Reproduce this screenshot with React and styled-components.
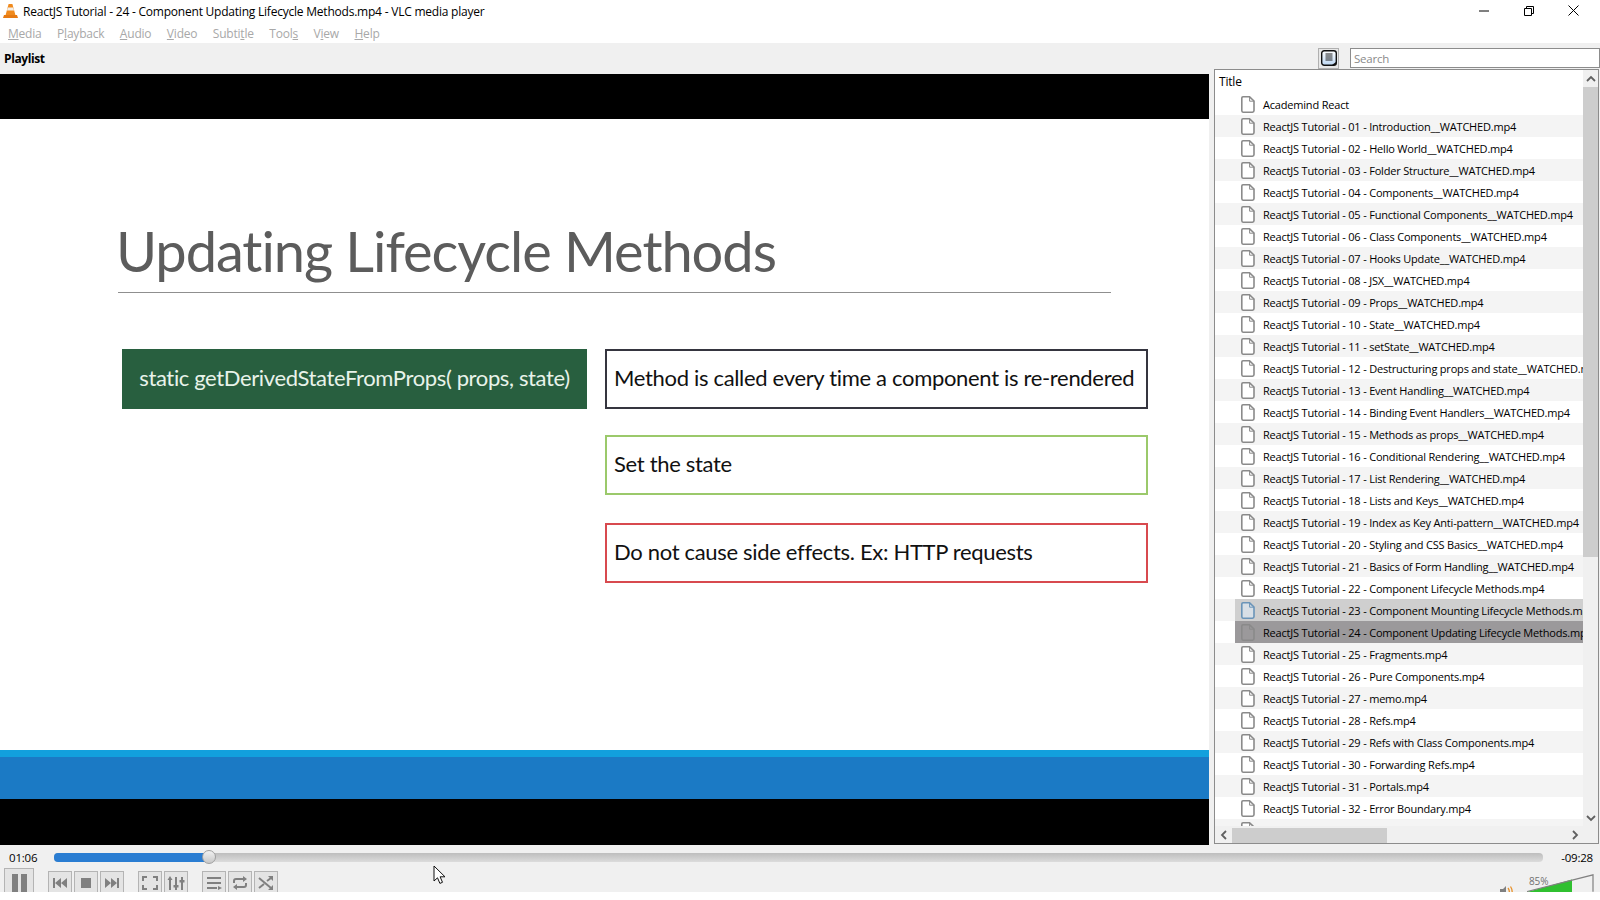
import styled, { createGlobalStyle } from "styled-components";

const GlobalStyle = createGlobalStyle`
  html, body {
    margin: 0;
    padding: 0;
    background: #ffffff;
  }
  * {
    box-sizing: border-box;
  }
`;

const titles = [
  "Academind React",
  "ReactJS Tutorial - 01 - Introduction__WATCHED.mp4",
  "ReactJS Tutorial - 02 - Hello World__WATCHED.mp4",
  "ReactJS Tutorial - 03 - Folder Structure__WATCHED.mp4",
  "ReactJS Tutorial - 04 - Components__WATCHED.mp4",
  "ReactJS Tutorial - 05 - Functional Components__WATCHED.mp4",
  "ReactJS Tutorial - 06 - Class Components__WATCHED.mp4",
  "ReactJS Tutorial - 07 - Hooks Update__WATCHED.mp4",
  "ReactJS Tutorial - 08 - JSX__WATCHED.mp4",
  "ReactJS Tutorial - 09 - Props__WATCHED.mp4",
  "ReactJS Tutorial - 10 - State__WATCHED.mp4",
  "ReactJS Tutorial - 11 - setState__WATCHED.mp4",
  "ReactJS Tutorial - 12 - Destructuring props and state__WATCHED.mp4",
  "ReactJS Tutorial - 13 - Event Handling__WATCHED.mp4",
  "ReactJS Tutorial - 14 - Binding Event Handlers__WATCHED.mp4",
  "ReactJS Tutorial - 15 - Methods as props__WATCHED.mp4",
  "ReactJS Tutorial - 16 - Conditional Rendering__WATCHED.mp4",
  "ReactJS Tutorial - 17 - List Rendering__WATCHED.mp4",
  "ReactJS Tutorial - 18 - Lists and Keys__WATCHED.mp4",
  "ReactJS Tutorial - 19 - Index as Key Anti-pattern__WATCHED.mp4",
  "ReactJS Tutorial - 20 - Styling and CSS Basics__WATCHED.mp4",
  "ReactJS Tutorial - 21 - Basics of Form Handling__WATCHED.mp4",
  "ReactJS Tutorial - 22 - Component Lifecycle Methods.mp4",
  "ReactJS Tutorial - 23 - Component Mounting Lifecycle Methods.mp4",
  "ReactJS Tutorial - 24 - Component Updating Lifecycle Methods.mp4",
  "ReactJS Tutorial - 25 - Fragments.mp4",
  "ReactJS Tutorial - 26 - Pure Components.mp4",
  "ReactJS Tutorial - 27 - memo.mp4",
  "ReactJS Tutorial - 28 - Refs.mp4",
  "ReactJS Tutorial - 29 - Refs with Class Components.mp4",
  "ReactJS Tutorial - 30 - Forwarding Refs.mp4",
  "ReactJS Tutorial - 31 - Portals.mp4",
  "ReactJS Tutorial - 32 - Error Boundary.mp4",
  "ReactJS Tutorial - 33 - Higher Order Components (Part 1).mp4",
];

// each menu label split around its underlined access key
const menus = [
  ["", "M", "edia"],
  ["P", "l", "ayback"],
  ["", "A", "udio"],
  ["", "V", "ideo"],
  ["Subti", "t", "le"],
  ["Tool", "s", ""],
  ["V", "i", "ew"],
  ["", "H", "elp"],
];

const Cone = () => (
  <svg width="15" height="16" viewBox="0 0 15 16">
    <path d="M5.6 1h3.8l3 11H2.6z" fill="#f08a1d" />
    <path d="M4.8 4.4h5.4l.8 3H4z" fill="#f4f0ea" />
    <path d="M1 12h13l1 3H0z" fill="#e67a12" />
  </svg>
);

const FileSvg = styled.svg`
  flex: none;
`;

const FileIcon = ({ color = "#8a8a8a", fill = "#ffffff" }) => (
  <FileSvg width="14" height="17" viewBox="0 0 14 17">
    <path
      d="M2 .8h6.6L13 5v9.6c0 .9-.6 1.6-1.5 1.6H2c-.9 0-1.2-.7-1.2-1.6V2C.8 1.2 1.2.8 2 .8z"
      fill={fill}
      stroke={color}
      strokeWidth="1.6"
    />
    <path d="M8.6 1v4.2H13" fill="none" stroke={color} strokeWidth="1" />
  </FileSvg>
);

const Page = styled.div`
  width: 1600px;
  height: 900px;
  position: relative;
  overflow: hidden;
  background: #ffffff;
`;

const Player = styled.div`
  height: 892px;
  display: flex;
  flex-direction: column;
  overflow: hidden;
  background: #f0f0f0;
  font-family: "Open Sans", "Noto Sans", sans-serif;
`;

const TitleBar = styled.div`
  height: 22px;
  flex: none;
  display: flex;
  align-items: center;
  background: #ffffff;
  padding-left: 3px;
`;

const WindowTitle = styled.div`
  margin-left: 5px;
  font-size: 12px;
  letter-spacing: -0.22px;
  color: #000000;
  white-space: nowrap;
`;

const WindowButtons = styled.div`
  margin-left: auto;
  padding-right: 4px;
  display: flex;
  align-self: flex-start;
`;

const WindowButton = styled.div`
  width: 45px;
  height: 21px;
  display: flex;
  align-items: center;
  justify-content: center;
`;

const MenuBar = styled.div`
  height: 21px;
  flex: none;
  display: flex;
  align-items: center;
  gap: 15.5px;
  padding: 2px 0 0 8px;
  background: #ffffff;
  font-size: 12px;
  letter-spacing: -0.21px;
  color: #a8a8a8;
`;

const Key = styled.span`
  text-decoration: underline;
`;

const PlaylistBar = styled.div`
  height: 31px;
  flex: none;
  display: flex;
  align-items: center;
  padding: 0 0 1px 4px;
`;

const PlaylistLabel = styled.div`
  font-size: 12px;
  font-weight: 700;
  letter-spacing: -0.4px;
  color: #000000;
`;

const ViewToggle = styled.div`
  width: 21px;
  height: 21px;
  margin-left: auto;
  margin-right: 11px;
  display: flex;
  align-items: center;
  justify-content: center;
  background: #e8e8e8;
  border: 1px solid #b0b0b0;
`;

const Search = styled.div`
  width: 250px;
  height: 20px;
  display: flex;
  align-items: center;
  padding-left: 3px;
  background: #ffffff;
  border: 1px solid #8c8c8c;
  font-size: 11.5px;
  letter-spacing: -0.2px;
  color: #8a8a8a;
`;

const Main = styled.div`
  height: 771px;
  flex: none;
  display: flex;
`;

const Video = styled.div`
  width: 1209px;
  flex: none;
  display: flex;
  flex-direction: column;
  background: #000000;
  font-family: "Lato", "Open Sans", sans-serif;
  font-variant-ligatures: none;
`;

const Letterbox = styled.div`
  flex: none;
  height: ${(p) => p.$height}px;
  background: #000000;
`;

const Slide = styled.div`
  height: 631px;
  flex: none;
  padding: 97px 98px 0 118px;
  background: #ffffff;
`;

const SlideTitle = styled.h1`
  margin: 0;
  height: 77px;
  line-height: 70px;
  text-indent: -2px;
  font-size: 56px;
  font-weight: 400;
  letter-spacing: -1.05px;
  color: #5c5c5c;
  border-bottom: 1px solid #8f8f8f;
  white-space: nowrap;
`;

const SlideBody = styled.div`
  margin: 56px -37px 0 4px;
  display: grid;
  grid-template-columns: 465px 543px;
  column-gap: 18px;
  align-items: start;
`;

const MethodName = styled.div`
  height: 60px;
  display: flex;
  align-items: center;
  justify-content: center;
  padding-bottom: 4px;
  background: #285f3f;
  color: #e8f3ea;
  font-size: 22px;
  letter-spacing: -0.37px;
  white-space: nowrap;
`;

const Notes = styled.div`
  display: flex;
  flex-direction: column;
  gap: 26px;
`;

const Note = styled.div`
  height: 60px;
  margin-top: ${(p) => p.$push || 0}px;
  display: flex;
  align-items: center;
  padding: 0 0 4px 7px;
  border: 2px solid ${(p) => p.$color};
  background: #ffffff;
  color: #111111;
  font-size: 22px;
  letter-spacing: -0.32px;
  white-space: nowrap;
`;

const SlideFooter = styled.div`
  height: 49px;
  flex: none;
  background: #1b7ac5;
  border-top: 7px solid #12a0dd;
`;

const Panel = styled.div`
  margin: -5px 1px 1px 5px;
  flex: 1;
  min-width: 0;
  display: flex;
  flex-direction: column;
  background: #ffffff;
  border: 1px solid #8c8c8c;
  font-family: "Open Sans", "Noto Sans", sans-serif;
`;

const PanelTop = styled.div`
  flex: 1;
  min-height: 0;
  display: flex;
`;

const ListArea = styled.div`
  flex: 1;
  min-width: 0;
  overflow: hidden;
`;

const ListHeader = styled.div`
  height: 23px;
  padding: 3px 0 0 4px;
  font-size: 12px;
  line-height: 18px;
  letter-spacing: -0.2px;
  color: #000000;
`;

const Row = styled.div`
  height: 22px;
  display: flex;
  align-items: center;
  background: ${(p) => (p.$odd ? "#f4f4f4" : "#ffffff")};
`;

const RowBody = styled.div`
  flex: 1;
  min-width: 0;
  height: 22px;
  margin-left: 20px;
  padding-left: 6px;
  display: flex;
  align-items: center;
  overflow: hidden;
  background: ${(p) => p.$bg || "transparent"};
`;

const RowTitle = styled.span`
  margin-left: 8px;
  font-size: 11px;
  letter-spacing: -0.19px;
  color: #000000;
  white-space: nowrap;
`;

const VScroll = styled.div`
  width: 15px;
  flex: none;
  display: flex;
  flex-direction: column;
  background: #f0f0f0;
`;

const ScrollArrow = styled.div`
  height: 17px;
  flex: none;
  display: flex;
  align-items: center;
  justify-content: center;
  background: #f0f0f0;
`;

const VTrack = styled.div`
  flex: 1;
`;

const VThumb = styled.div`
  height: 470px;
  background: #cdcdcd;
`;

const HScroll = styled.div`
  height: 17px;
  flex: none;
  display: flex;
  padding-right: 15px;
  background: #f0f0f0;
`;

const HArrow = styled.div`
  width: 17px;
  flex: none;
  display: flex;
  align-items: center;
  justify-content: center;
`;

const HTrack = styled.div`
  flex: 1;
  padding-top: 2px;
`;

const HThumb = styled.div`
  width: 155px;
  height: 100%;
  background: #cdcdcd;
`;

const Controls = styled.div`
  flex: 1;
  min-height: 0;
  display: flex;
  flex-direction: column;
  background: #f0f0f0;
`;

const SeekRow = styled.div`
  height: 23px;
  flex: none;
  display: flex;
  align-items: center;
  padding: 2px 7px 0 9px;
  font-size: 11.5px;
  letter-spacing: -0.2px;
  color: #000000;
`;

const Time = styled.span`
  width: 45px;
  flex: none;
`;

const RemainingTime = styled.span`
  width: 50px;
  flex: none;
  text-align: right;
`;

const SeekTrack = styled.div`
  flex: 1;
  height: 9px;
  position: relative;
  border-radius: 4px;
  background: linear-gradient(#bdbdbd, #dcdcdc);
`;

const SeekFill = styled.div`
  height: 100%;
  border-radius: 4px 0 0 4px;
  background: #2a7dd2;
`;

const SeekHandle = styled.div`
  position: absolute;
  top: -3px;
  width: 14px;
  height: 14px;
  border-radius: 50%;
  background: linear-gradient(#f2f2f2, #c8c8c8);
  border: 1px solid #a0a0a0;
`;

const ButtonRow = styled.div`
  height: 24px;
  flex: none;
  display: flex;
  align-items: flex-start;
  padding: 0 0 0 4px;
`;

const ButtonGroup = styled.div`
  display: flex;
  gap: 2px;
  margin-left: ${(p) => p.$gap}px;
  margin-top: 3px;
`;

const PauseButton = styled.div`
  width: 30px;
  height: 30px;
  flex: none;
  display: flex;
  align-items: flex-start;
  justify-content: center;
  padding-top: 5px;
  gap: 3px;
  background: #e4e4e4;
  border: 1px solid #b4b4b4;
`;

const PauseBar = styled.div`
  width: 6px;
  height: 19px;
  background: #808080;
`;

const ToolButton = styled.div`
  width: 24px;
  height: 24px;
  display: flex;
  align-items: flex-start;
  justify-content: center;
  padding-top: 2px;
  background: #e4e4e4;
  border: 1px solid #b4b4b4;
`;

const VolumeArea = styled.div`
  margin-left: auto;
  margin-right: 5px;
  display: flex;
  align-items: flex-end;
  align-self: flex-end;
  position: relative;
  height: 20px;
`;

const Speaker = styled.svg`
  margin-right: 13px;
  margin-bottom: -5px;
`;

const VolumeLabel = styled.span`
  position: absolute;
  left: 29px;
  top: 2px;
  font-size: 10px;
  letter-spacing: -0.1px;
  color: #707070;
`;

const Pointer = styled.svg`
  position: absolute;
  left: 433px;
  top: 865px;
`;

const Chevron = ({ d }) => (
  <svg width="10" height="10" viewBox="0 0 10 10">
    <path d={d} fill="none" stroke="#606060" strokeWidth="1.8" />
  </svg>
);

const Glyph = ({ children }) => (
  <svg width="18" height="18" viewBox="0 0 18 18" fill="#808080" stroke="#808080">
    {children}
  </svg>
);

export default function App() {
  const played = (66 / 634) * 100;

  return (
    <Page>
      <GlobalStyle />
      <Player>
        <TitleBar>
          <Cone />
          <WindowTitle>
            ReactJS Tutorial - 24 - Component Updating Lifecycle Methods.mp4 - VLC media player
          </WindowTitle>
          <WindowButtons>
            <WindowButton>
              <svg width="10" height="10" viewBox="0 0 10 10">
                <path d="M0 5h10" stroke="#000" strokeWidth="1" />
              </svg>
            </WindowButton>
            <WindowButton>
              <svg width="10" height="10" viewBox="0 0 10 10" fill="none" stroke="#000">
                <path d="M.5 2.500h7v7h-7z" />
                <path d="M2.500 2.500v-2h7v7h-2" />
              </svg>
            </WindowButton>
            <WindowButton>
              <svg width="11" height="11" viewBox="0 0 11 11" stroke="#000">
                <path d="M.5.5l10 10M10.500.5l-10 10" />
              </svg>
            </WindowButton>
          </WindowButtons>
        </TitleBar>

        <MenuBar>
          {menus.map(([before, key, after]) => (
            <span key={before + key + after}>
              {before}
              <Key>{key}</Key>
              {after}
            </span>
          ))}
        </MenuBar>

        <PlaylistBar>
          <PlaylistLabel>Playlist</PlaylistLabel>
          <ViewToggle>
            <svg width="16" height="16" viewBox="0 0 16 16">
              <defs>
                <linearGradient id="toggleFill" x1="0" y1="0" x2="0" y2="1">
                  <stop offset="0" stopColor="#ffffff" />
                  <stop offset="1" stopColor="#bcd6f2" />
                </linearGradient>
              </defs>
              <rect x=".7" y=".7" width="14.6" height="14.6" rx="2.500" fill="url(#toggleFill)" stroke="#111" strokeWidth="1.400" />
              <path d="M4.500 4h7M4.500 6h7M4.500 8h7M4.500 10h7" stroke="#222" strokeWidth="1.100" />
              <path d="M11 15l4-3v3z" fill="#111" />
            </svg>
          </ViewToggle>
          <Search>Search</Search>
        </PlaylistBar>

        <Main>
          <Video>
            <Letterbox $height={45} />
            <Slide>
              <SlideTitle>Updating Lifecycle Methods</SlideTitle>
              <SlideBody>
                <MethodName>static getDerivedStateFromProps( props, state)</MethodName>
                <Notes>
                  <Note $color="#35353f">Method is called every time a component is re-rendered</Note>
                  <Note $color="#9bc96b">Set the state</Note>
                  <Note $color="#d84a4f" $push={2}>Do not cause side effects. Ex: HTTP requests</Note>
                </Notes>
              </SlideBody>
            </Slide>
            <SlideFooter />
            <Letterbox $height={46} />
          </Video>

          <Panel>
            <PanelTop>
              <ListArea>
                <ListHeader>Title</ListHeader>
                {titles.map((title, i) => {
                  const selected = i === 23 ? "#cfcfcf" : i === 24 ? "#9b999b" : null;
                  return (
                    <Row key={title} $odd={i % 2 === 1}>
                      <RowBody $bg={selected}>
                        <FileIcon
                          color={i === 23 ? "#6a94b8" : "#8a8a8a"}
                          fill={i === 23 ? "#d8dfe6" : i === 24 ? "#9b999b" : "#ffffff"}
                        />
                        <RowTitle>{title}</RowTitle>
                      </RowBody>
                    </Row>
                  );
                })}
              </ListArea>
              <VScroll>
                <ScrollArrow>
                  <Chevron d="M1 7l4-4 4 4" />
                </ScrollArrow>
                <VTrack>
                  <VThumb />
                </VTrack>
                <ScrollArrow>
                  <Chevron d="M1 3l4 4 4-4" />
                </ScrollArrow>
              </VScroll>
            </PanelTop>
            <HScroll>
              <HArrow>
                <Chevron d="M7 1L3 5l4 4" />
              </HArrow>
              <HTrack>
                <HThumb />
              </HTrack>
              <HArrow>
                <Chevron d="M3 1l4 4-4 4" />
              </HArrow>
            </HScroll>
          </Panel>
        </Main>

        <Controls>
          <SeekRow>
            <Time>01:06</Time>
            <SeekTrack>
              <SeekFill style={{ width: `${played}%` }} />
              <SeekHandle style={{ left: `calc(${played}% - 7px)` }} />
            </SeekTrack>
            <RemainingTime>-09:28</RemainingTime>
          </SeekRow>
          <ButtonRow>
            <PauseButton>
              <PauseBar />
              <PauseBar />
            </PauseButton>
            <ButtonGroup $gap={14}>
              <ToolButton>
                <Glyph>
                  <path d="M2 4h2v10H2zM10 4v10L4 9zM16 4v10l-6-5z" stroke="none" />
                </Glyph>
              </ToolButton>
              <ToolButton>
                <Glyph>
                  <rect x="4" y="4" width="10" height="10" stroke="none" />
                </Glyph>
              </ToolButton>
              <ToolButton>
                <Glyph>
                  <path d="M16 4h-2v10h2zM8 4v10l6-5zM2 4v10l6-5z" stroke="none" />
                </Glyph>
              </ToolButton>
            </ButtonGroup>
            <ButtonGroup $gap={14}>
              <ToolButton>
                <Glyph>
                  <path d="M2 7V3h4M12 3h4v4M16 11v4h-4M6 15H2v-4" fill="none" strokeWidth="2" />
                </Glyph>
              </ToolButton>
              <ToolButton>
                <Glyph>
                  <path d="M3 6v10M9 3v13M15 3v13" fill="none" strokeWidth="2" />
                  <path d="M.5 6L3 2l2.500 4zM6.500 11h5v2.500h-5zM12.500 6h5v2.500h-5z" stroke="none" />
                </Glyph>
              </ToolButton>
            </ButtonGroup>
            <ButtonGroup $gap={14}>
              <ToolButton>
                <Glyph>
                  <path d="M2 3h14v2H2zM2 8h14v2H2zM2 13h10v2H2zM13 12l4 2-4 2z" stroke="none" />
                </Glyph>
              </ToolButton>
              <ToolButton>
                <Glyph>
                  <path d="M3 9V7c0-1.500 1-2 2-2h8M15 9v2c0 1.500-1 2-2 2H5" fill="none" strokeWidth="2" />
                  <path d="M12 2l4 3-4 3zM6 10l-4 3 4 3z" stroke="none" />
                </Glyph>
              </ToolButton>
              <ToolButton>
                <Glyph>
                  <path d="M2 4l12 10M2 14l5-4M10 7l4-3" fill="none" strokeWidth="2" />
                  <path d="M11 2h5v5zM11 16h5v-5z" stroke="none" />
                </Glyph>
              </ToolButton>
            </ButtonGroup>
            <VolumeArea>
              <Speaker width="14" height="12" viewBox="0 0 14 12">
                <path d="M0 4h3l3-3v11H0z" fill="#808080" />
                <path d="M8 3c1.500 2 1.500 5 0 7M10.500 1.500c2 3 2 7 0 10" fill="none" stroke="#e8912a" strokeWidth="1.300" />
              </Speaker>
              <VolumeLabel>85%</VolumeLabel>
              <svg width="68" height="18" viewBox="0 0 68 18">
                <path d="M0 18L45 5.500v12.500z" fill="#30c030" />
                <path d="M0 17.500L66 .8v17" fill="none" stroke="#808080" strokeWidth="1.200" />
              </svg>
            </VolumeArea>
          </ButtonRow>
        </Controls>
      </Player>
      <Pointer width="14" height="20" viewBox="0 0 14 20">
        <path d="M1 1v15l3.500-3.200 2.400 5.600 2.600-1.100-2.400-5.500H12z" fill="#ffffff" stroke="#111" strokeWidth="1" />
      </Pointer>
    </Page>
  );
}
